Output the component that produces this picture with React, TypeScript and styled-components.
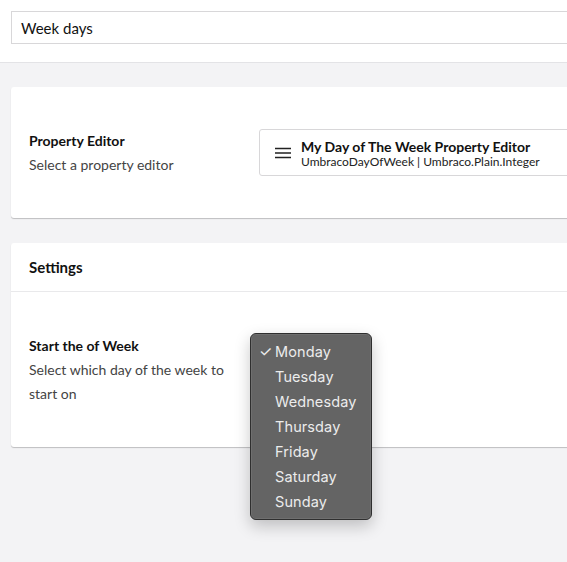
import React from "react";
import styled, { createGlobalStyle } from "styled-components";

const Global = createGlobalStyle`
  html, body { margin: 0; padding: 0; overflow: hidden; }
  body { font-family: Lato, "Noto Sans", sans-serif; color: #1b264f; background: #f3f3f5; }
  * { box-sizing: border-box; }
`;

const Page = styled.div`
  width: 620px;
  height: 562px;
  position: relative;
  background: #f3f3f5;
  color: #000;
`;

const Header = styled.header`
  height: 63px;
  background: #fff;
  border-bottom: 1px solid #e3e3e6;
  padding: 11px 0 0 11px;
`;

const NameInput = styled.div`
  height: 33px;
  border: 1px solid #d8d7d9;
  font-size: 15px;
  line-height: 33px;
  padding-left: 9px;
  color: #111;
`;

const Main = styled.main`
  padding: 24px 0 0 11px;
  display: flex;
  flex-direction: column;
  gap: 25px;
`;

const Card = styled.section`
  background: #fff;
  border-radius: 3px;
  box-shadow: 0 1px 1px rgba(0, 0, 0, 0.22);
`;

const CardHeader = styled.div`
  height: 49px;
  padding: 0 18px;
  display: flex;
  align-items: center;
  font-size: 15px;
  font-weight: 700;
  color: #111;
  border-bottom: 1px solid #e9e9eb;
`;

const CardBody = styled.div`
  padding: 42px 18px 41px;
`;

const Row = styled.div`
  display: flex;
  align-items: flex-start;
`;

const Label = styled.div`
  width: 230px;
  flex: none;
  padding: 2px 20px 0 0;
`;

const LabelTitle = styled.div`
  font-size: 14px;
  font-weight: 700;
  line-height: 20px;
  color: #111;
`;

const LabelDesc = styled.div`
  margin-top: 2px;
  font-size: 14px;
  line-height: 24px;
  color: #444;
`;

const EditorBox = styled.div`
  flex: 1;
  height: 47px;
  border: 1px solid #d8d7d9;
  border-radius: 3px;
  display: flex;
  align-items: center;
  padding-left: 15px;
  gap: 10px;
`;

const EditorText = styled.div`
  display: flex;
  flex-direction: column;
`;

const EditorName = styled.div`
  font-size: 14px;
  font-weight: 700;
  line-height: 17px;
  color: #111;
`;

const EditorAlias = styled.div`
  font-size: 12px;
  line-height: 13px;
  color: #222;
`;

const Menu = styled.ul`
  position: absolute;
  left: 250px;
  top: 333px;
  width: 122px;
  margin: 0;
  padding: 5px 0 5px;
  list-style: none;
  background: #646464;
  border: 1px solid #2f2f2f;
  border-radius: 6px;
  box-shadow: 0 0 0 0.5px rgba(255,255,255,0.15) inset, 0 6px 16px rgba(0, 0, 0, 0.22);
  font-family: Inter, "Liberation Sans", sans-serif;
`;

const MenuItem = styled.li`
  position: relative;
  height: 25px;
  line-height: 25px;
  padding-left: 24px;
  font-size: 14.5px;
  color: #ececec;
  letter-spacing: 0.1px;
`;

const Check = styled.span`
  position: absolute;
  left: 8px;
  top: 0;
  font-size: 15px;
`;

const Hamburger = () => (
  <svg width="16" height="12" viewBox="0 0 16 12" fill="none" stroke="#222" strokeWidth="1.4">
    <path d="M0 1.5H16M0 6H16M0 10.5H16" />
  </svg>
);

const days = ["Monday", "Tuesday", "Wednesday", "Thursday", "Friday", "Saturday", "Sunday"];

export default function App() {
  return (
    <Page>
      <Global />
      <Header>
        <NameInput>Week days</NameInput>
      </Header>
      <Main>
        <Card>
          <CardBody>
            <Row>
              <Label>
                <LabelTitle>Property Editor</LabelTitle>
                <LabelDesc>Select a property editor</LabelDesc>
              </Label>
              <EditorBox>
                <Hamburger />
                <EditorText>
                  <EditorName>My Day of The Week Property Editor</EditorName>
                  <EditorAlias>UmbracoDayOfWeek | Umbraco.Plain.Integer</EditorAlias>
                </EditorText>
              </EditorBox>
            </Row>
          </CardBody>
        </Card>
        <Card>
          <CardHeader>Settings</CardHeader>
          <CardBody>
            <Row>
              <Label>
                <LabelTitle>Start the of Week</LabelTitle>
                <LabelDesc>Select which day of the week to start on</LabelDesc>
              </Label>
            </Row>
          </CardBody>
        </Card>
      </Main>
      <Menu>
        {days.map((d, i) => (
          <MenuItem key={d}>
            {i === 0 && <Check>✓</Check>}
            {d}
          </MenuItem>
        ))}
      </Menu>
    </Page>
  );
}
